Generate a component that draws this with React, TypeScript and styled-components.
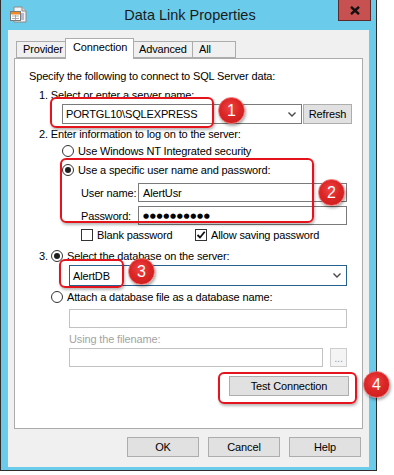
import React from "react";
import styled, { createGlobalStyle } from "styled-components";

const Global = createGlobalStyle`
  html, body { margin: 0; padding: 0; background: #ffffff; }
  body { font-family: "Liberation Sans", Arial, sans-serif; font-size: 11px; letter-spacing: -0.15px; color: #000; }
  button { font-family: "Liberation Sans", Arial, sans-serif; letter-spacing: -0.15px; }
`;

const Page = styled.div`
  position: relative;
  width: 394px;
  height: 475px;
  overflow: hidden;
  background: #ffffff;
`;

const Window = styled.div`
  width: 377px;
  box-sizing: border-box;
  background: #6bcbea;
  border: 1px solid #2e2e2e;
  border-top: none;
  padding: 0 7px 3px 7px;
  display: flex;
  flex-direction: column;
`;

const TitleBar = styled.div`
  margin: 0 -7px;
  height: 30px;
  display: grid;
  grid-template-columns: 1fr auto 1fr;
  align-items: start;
  padding: 0 5px 0 8px;
`;

const IconCell = styled.div`
  padding-top: 6px;
  display: flex;
`;

const TitleText = styled.div`
  line-height: 30px;
  font-size: 14.5px;
  letter-spacing: 0;
  color: #1b1b1b;
`;

const CloseCell = styled.div`
  justify-self: end;
  display: flex;
`;

const CloseBtn = styled.div`
  width: 33px;
  height: 21px;
  box-sizing: border-box;
  background: #c75050;
  border: 1px solid #5b2a2a;
  border-top: none;
  display: flex;
  align-items: center;
  justify-content: center;
`;

const Client = styled.div`
  background: #f0f0f0;
  padding: 8px 6px 10px 6px;
  display: flex;
  flex-direction: column;
`;

const TabStrip = styled.div`
  height: 20px;
  display: flex;
  align-items: flex-end;
  padding-left: 2px;
  position: relative;
  z-index: 2;
`;

const Tab = styled.div<{ $w: number; $active?: boolean; $join?: boolean }>`
  width: ${(p) => p.$w}px;
  height: ${(p) => (p.$active ? 21 : 17)}px;
  box-sizing: border-box;
  border: 1px solid #acacac;
  border-bottom: ${(p) => (p.$active ? "none" : "1px solid #acacac")};
  background: ${(p) => (p.$active ? "#ffffff" : "#f0f0f0")};
  margin-bottom: ${(p) => (p.$active ? -1 : 0)}px;
  margin-left: ${(p) => (p.$active ? -2 : p.$join ? -1 : 0)}px;
  margin-right: ${(p) => (p.$active ? -2 : 0)}px;
  position: relative;
  z-index: ${(p) => (p.$active ? 2 : 1)};
  padding: ${(p) => (p.$active ? "2px 0 0 7px" : "1px 0 0 6px")};
  line-height: 13px;
  font-size: 11px;
  color: #000;
`;

const Panel = styled.div`
  height: 371px;
  box-sizing: border-box;
  background: #ffffff;
  border: 1px solid #acacac;
  padding: 10px 0 0 14px;
  display: flex;
  flex-direction: column;
`;

const Row = styled.div<{ $mt?: number; $ml?: number; $h?: number }>`
  display: flex;
  align-items: center;
  height: ${(p) => p.$h ?? 14}px;
  margin-top: ${(p) => p.$mt ?? 0}px;
  margin-left: ${(p) => p.$ml ?? 0}px;
  white-space: nowrap;
  line-height: 14px;
`;

const ActionRow = styled.div`
  display: flex;
  justify-content: flex-end;
  margin-top: 9px;
  padding-right: 13px;
`;

const Muted = styled.span`
  color: #a3a3a3;
`;

const Radio = styled.span<{ $on?: boolean }>`
  width: 12px;
  height: 12px;
  box-sizing: border-box;
  border-radius: 50%;
  border: 1px solid #333333;
  background: #ffffff;
  flex: none;
  margin-right: 4px;
  display: inline-flex;
  align-items: center;
  justify-content: center;
  &::after {
    content: "";
    display: ${(p) => (p.$on ? "block" : "none")};
    width: 6px;
    height: 6px;
    border-radius: 50%;
    background: #1e1e1e;
  }
`;

const Num = styled.span<{ $w: number }>`
  width: ${(p) => p.$w}px;
  flex: none;
`;

const Check = styled.span`
  width: 12px;
  height: 12px;
  box-sizing: border-box;
  border: 1px solid #333333;
  background: #ffffff;
  flex: none;
  margin-right: 4px;
  display: inline-flex;
  align-items: center;
  justify-content: center;
`;

const CheckGroup = styled.span<{ $w?: number }>`
  display: inline-flex;
  align-items: center;
  width: ${(p) => (p.$w ? `${p.$w}px` : "auto")};
`;

const FieldLabel = styled.span`
  width: 57px;
  flex: none;
`;

const Field = styled.div<{ $w: number; $h?: number; $disabled?: boolean; $pl?: number }>`
  width: ${(p) => p.$w}px;
  height: ${(p) => p.$h ?? 19}px;
  box-sizing: border-box;
  border: 1px solid ${(p) => (p.$disabled ? "#c2c2c2" : "#7a7a7a")};
  background: #ffffff;
  display: flex;
  align-items: center;
  padding-left: ${(p) => p.$pl ?? 3}px;
  flex: none;
`;

const Combo = styled.div<{ $w: number; $h: number; $focus?: boolean }>`
  width: ${(p) => p.$w}px;
  height: ${(p) => p.$h}px;
  box-sizing: border-box;
  border: 1px solid ${(p) => (p.$focus ? "#26608f" : "#7a7a7a")};
  background: #ffffff;
  display: flex;
  align-items: center;
  justify-content: space-between;
  padding: 0 5px 0 3px;
  flex: none;
`;

const Dots = styled.span`
  font-family: "DejaVu Sans", sans-serif;
  font-size: 7px;
  letter-spacing: 0.65px;
  color: #000;
`;

const Btn = styled.button<{ $w: number; $h?: number; $ml?: number; $disabled?: boolean }>`
  width: ${(p) => p.$w}px;
  height: ${(p) => p.$h ?? 20}px;
  margin-left: ${(p) => p.$ml ?? 0}px;
  box-sizing: border-box;
  border: 1px solid ${(p) => (p.$disabled ? "#cccccc" : "#adadad")};
  background: ${(p) => (p.$disabled ? "#f4f4f4" : "#e1e1e1")};
  color: ${(p) => (p.$disabled ? "#a0a0a0" : "#000000")};
  font-size: 11px;
  padding: 0;
  line-height: 14px;
  flex: none;
`;

const Footer = styled.div`
  display: flex;
  justify-content: flex-end;
  gap: 9px;
  margin-top: 8px;
  padding-right: 2px;
`;

const Mark = styled.div`
  position: absolute;
  box-sizing: border-box;
  border: 2px solid #e5141c;
  border-radius: 6px;
  box-shadow: 1px 2px 3px rgba(0, 0, 0, 0.28);
  pointer-events: none;
`;

const Badge = styled.div`
  position: absolute;
  width: 27px;
  height: 27px;
  box-sizing: border-box;
  border-radius: 50%;
  background: radial-gradient(circle at 45% 38%, #ef4444 0%, #dc2626 45%, #c41a1a 100%);
  border: 1px solid #f06a6a;
  box-shadow: 1px 2px 3px rgba(0, 0, 0, 0.35);
  color: #ffffff;
  font-size: 16px;
  letter-spacing: 0;
  display: flex;
  align-items: center;
  justify-content: center;
  line-height: 1;
`;

const Chevron = () => (
  <svg width="8" height="5" viewBox="0 0 8 5">
    <path d="M0.5 0.5 L4 4 L7.5 0.5" fill="none" stroke="#4a4a4a" strokeWidth="1.4" />
  </svg>
);

const TickMark = () => (
  <svg width="10" height="10" viewBox="0 0 10 10">
    <path d="M1.5 5 L4 7.5 L8.7 1.8" fill="none" stroke="#111" strokeWidth="1.8" />
  </svg>
);

const AppIcon = () => (
  <svg width="18" height="17" viewBox="0 0 18 17">
    <path d="M5 1 H13 L17 5 V16 H5 Z" fill="#f4f4f4" stroke="#8a8a8a" />
    <path d="M13 1 V5 H17" fill="#dcdcdc" stroke="#8a8a8a" />
    <rect x="9" y="7" width="6" height="7" fill="#b8b8d0" />
    <rect x="1.5" y="5.5" width="10" height="9" fill="#ffffff" stroke="#7a7a7a" />
    <rect x="2" y="6" width="9" height="2.5" fill="#f08a24" />
    <path d="M3 10 H10 M3 12.5 H10 M6.5 9 V14" stroke="#9a9a9a" strokeWidth="0.8" />
  </svg>
);

const CloseGlyph = () => (
  <svg width="10" height="9" viewBox="0 0 10 9">
    <path d="M1 0.8 L9 8.2 M9 0.8 L1 8.2" stroke="#111" strokeWidth="2.4" />
  </svg>
);

const marks = [
  { x: 50, y: 97, w: 164, h: 31 },
  { x: 60, y: 158, w: 254, h: 65 },
  { x: 59, y: 259, w: 65, h: 29 },
  { x: 218, y: 372, w: 139, h: 32 },
];

const badges = [
  { n: "1", x: 218, y: 97 },
  { n: "2", x: 318, y: 179 },
  { n: "3", x: 128, y: 258 },
  { n: "4", x: 363, y: 371 },
];

export default function App() {
  return (
    <Page>
      <Global />
      <Window>
        <TitleBar>
          <IconCell>
            <AppIcon />
          </IconCell>
          <TitleText>Data Link Properties</TitleText>
          <CloseCell>
            <CloseBtn>
              <CloseGlyph />
            </CloseBtn>
          </CloseCell>
        </TitleBar>
        <Client>
          <TabStrip>
            <Tab $w={51}>Provider</Tab>
            <Tab $w={69} $active>
              Connection
            </Tab>
            <Tab $w={61}>Advanced</Tab>
            <Tab $w={44} $join>
              All
            </Tab>
          </TabStrip>
          <Panel>
            <Row>Specify the following to connect to SQL Server data:</Row>
            <Row $mt={5} $ml={10}>
              1. Select or enter a server name:
            </Row>
            <Row $mt={2} $ml={33} $h={20}>
              <Combo $w={240} $h={20}>
                <span>PORTGL10\SQLEXPRESS</span>
                <Chevron />
              </Combo>
              <Btn $w={49} $ml={1}>
                Refresh
              </Btn>
            </Row>
            <Row $mt={3} $ml={10}>
              2. Enter information to log on to the server:
            </Row>
            <Row $mt={3} $ml={33}>
              <Radio />
              Use Windows NT Integrated security
            </Row>
            <Row $mt={5} $ml={33}>
              <Radio $on />
              Use a specific user name and password:
            </Row>
            <Row $mt={6} $ml={52} $h={19}>
              <FieldLabel>User name:</FieldLabel>
              <Field $w={209} $pl={4}>
                AlertUsr
              </Field>
            </Row>
            <Row $mt={4} $ml={52} $h={19}>
              <FieldLabel>Password:</FieldLabel>
              <Field $w={209} $pl={4}>
                <Dots>●●●●●●●●●●</Dots>
              </Field>
            </Row>
            <Row $mt={3} $ml={52}>
              <CheckGroup $w={114}>
                <Check />
                Blank password
              </CheckGroup>
              <CheckGroup>
                <Check>
                  <TickMark />
                </Check>
                Allow saving password
              </CheckGroup>
            </Row>
            <Row $mt={7} $ml={10}>
              <Num $w={12}>3.</Num>
              <Radio $on />
              Select the database on the server:
            </Row>
            <Row $mt={2} $ml={40} $h={21}>
              <Combo $w={278} $h={21} $focus>
                <span>AlertDB</span>
                <Chevron />
              </Combo>
            </Row>
            <Row $mt={4} $ml={22}>
              <Radio />
              Attach a database file as a database name:
            </Row>
            <Row $mt={5} $ml={40} $h={19}>
              <Field $w={278} $disabled />
            </Row>
            <Row $mt={4} $ml={40}>
              <Muted>Using the filename:</Muted>
            </Row>
            <Row $mt={2} $ml={40} $h={19}>
              <Field $w={254} $disabled />
              <Btn $w={17} $h={19} $ml={7} $disabled>
                ...
              </Btn>
            </Row>
            <ActionRow>
              <Btn $w={120}>Test Connection</Btn>
            </ActionRow>
          </Panel>
          <Footer>
            <Btn $w={72}>OK</Btn>
            <Btn $w={72}>Cancel</Btn>
            <Btn $w={72}>Help</Btn>
          </Footer>
        </Client>
      </Window>
      {marks.map((m, i) => (
        <Mark key={i} style={{ left: m.x, top: m.y, width: m.w, height: m.h }} />
      ))}
      {badges.map((b) => (
        <Badge key={b.n} style={{ left: b.x, top: b.y }}>
          {b.n}
        </Badge>
      ))}
    </Page>
  );
}
